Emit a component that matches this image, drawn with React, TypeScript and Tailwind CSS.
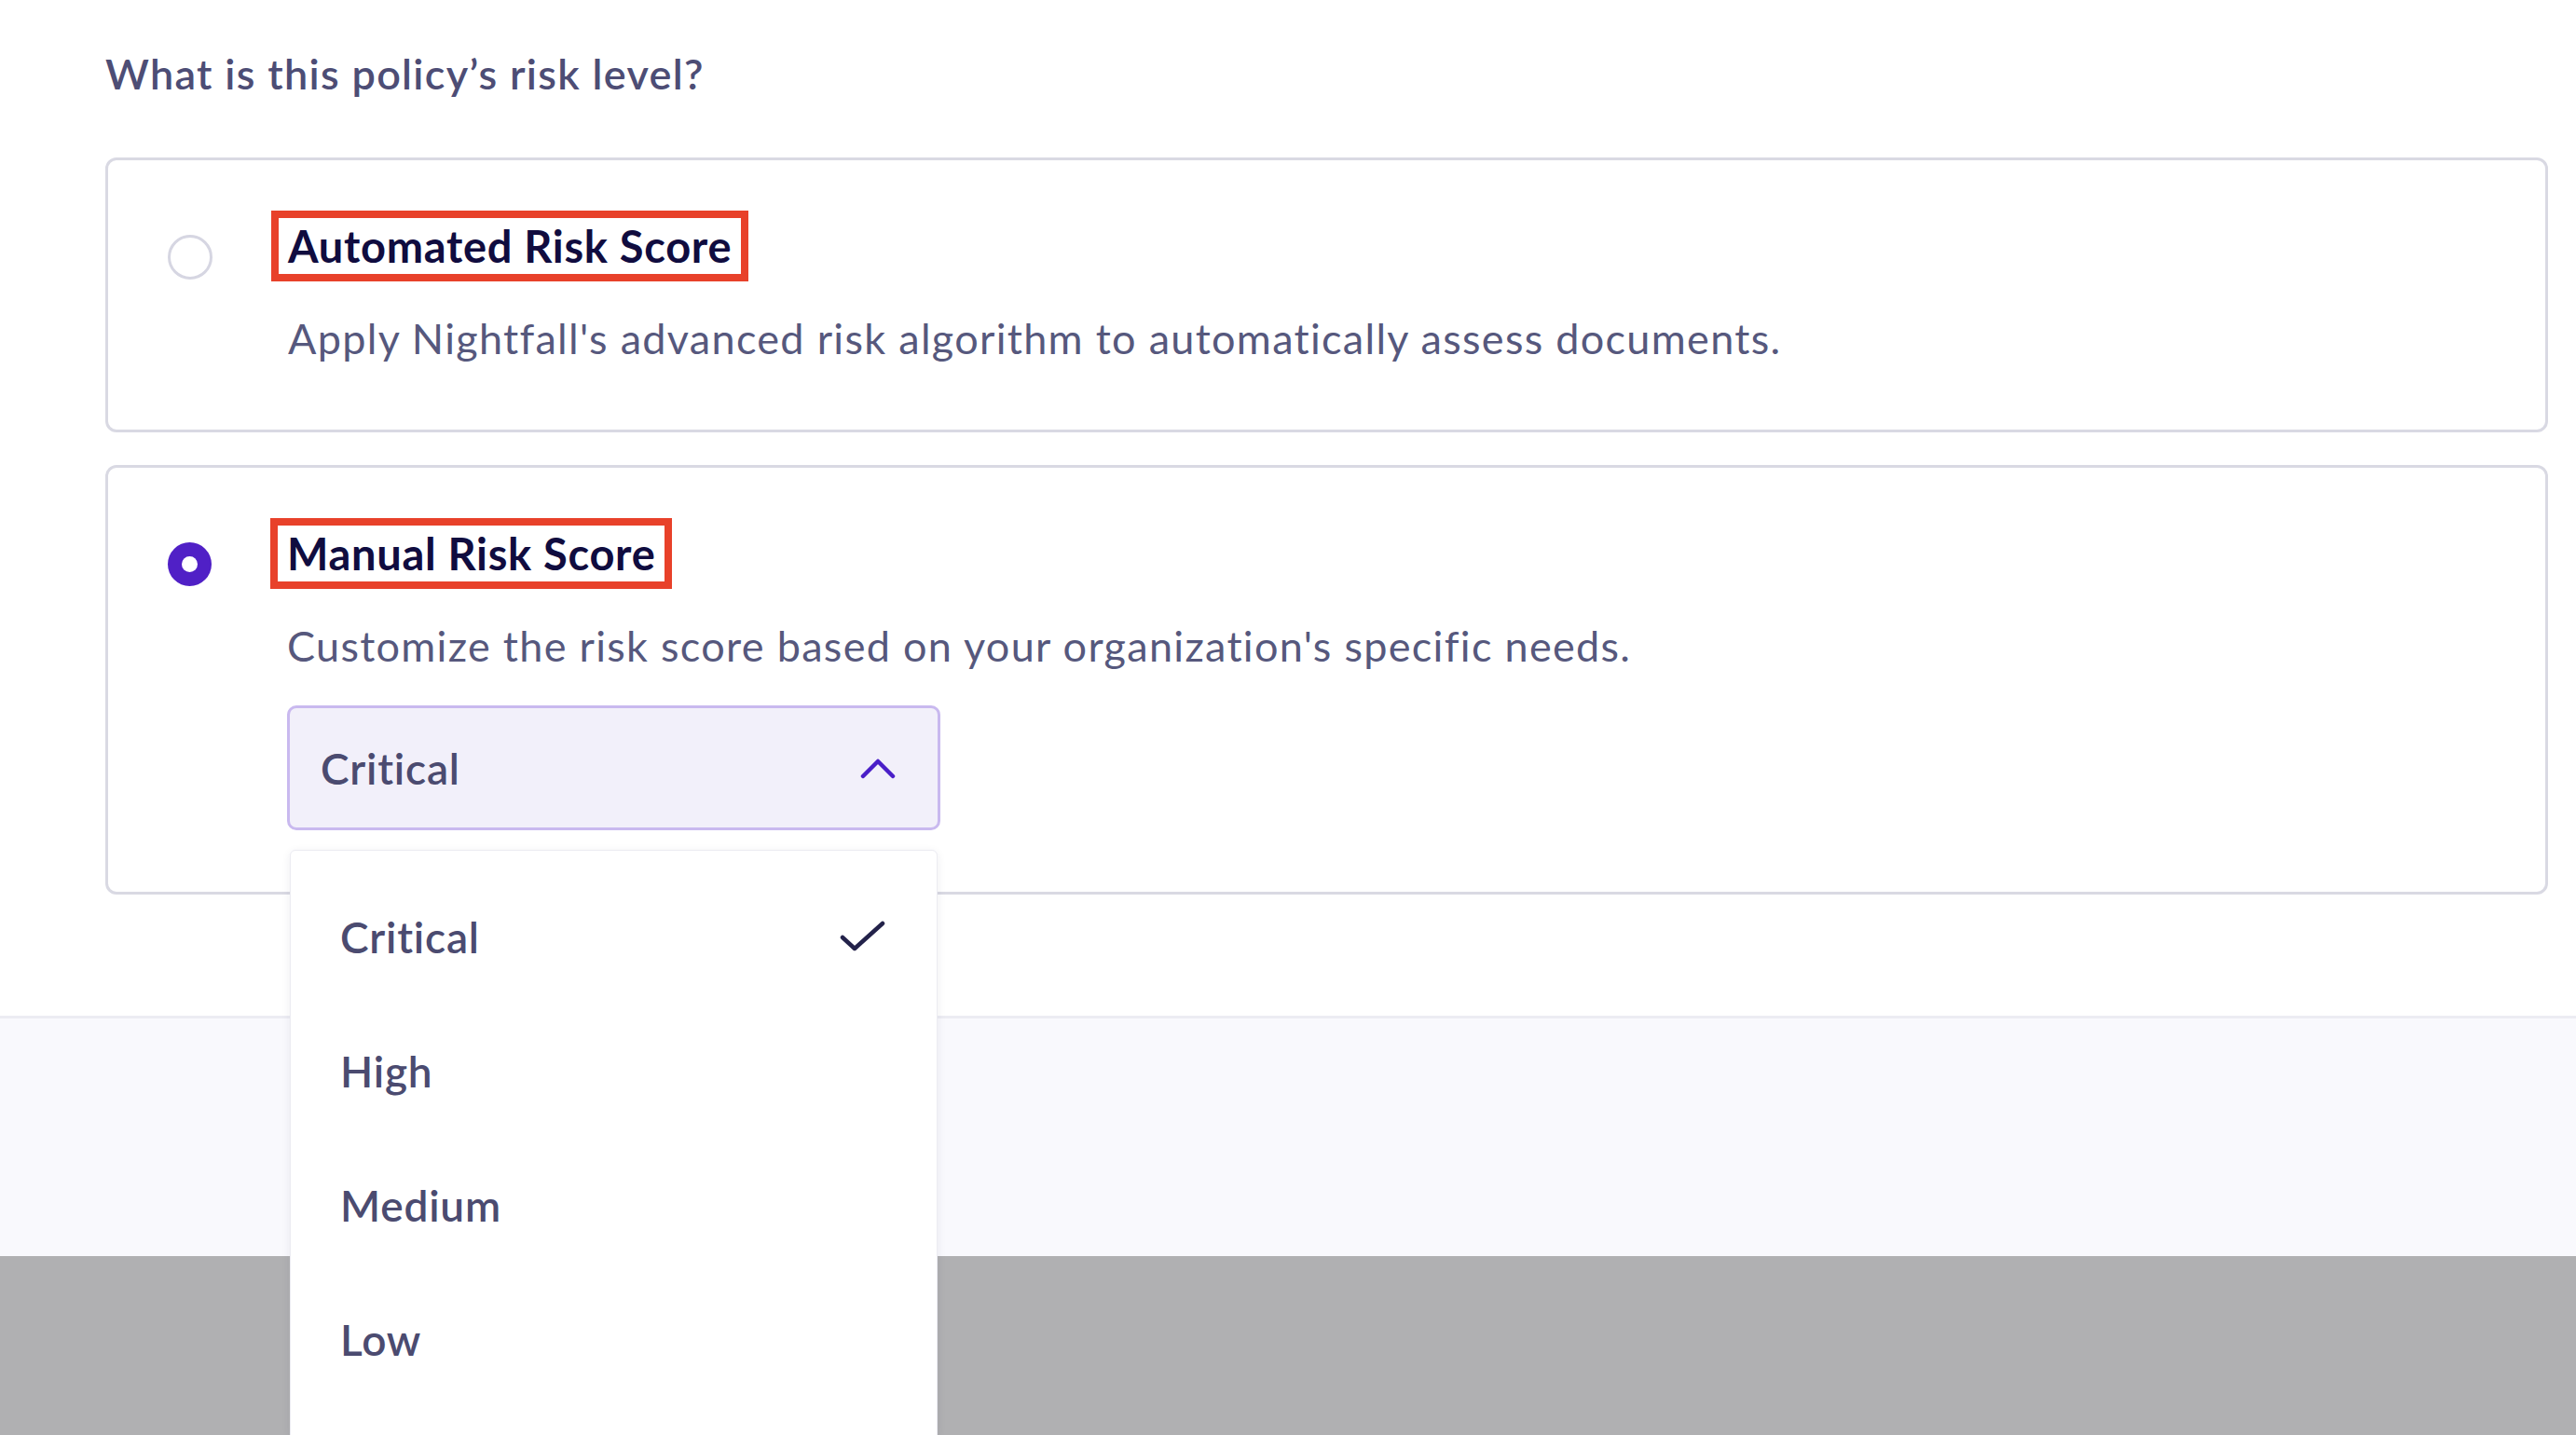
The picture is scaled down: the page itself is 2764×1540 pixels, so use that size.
const levels = ['Critical', 'High', 'Medium', 'Low'];

function Radio({ checked }: { checked: boolean }) {
  if (checked) {
    return (
      <div className="w-[47px] h-[47px] rounded-full bg-[#5020c6] flex items-center justify-center">
        <div className="w-[17px] h-[17px] rounded-full bg-white" />
      </div>
    );
  }
  return <div className="w-[48px] h-[48px] rounded-full border-[3px] border-[#d6d6e2]" />;
}

function OptionCard({
  checked,
  title,
  description,
  children,
  className,
}: {
  checked: boolean;
  title: string;
  description: string;
  children?: React.ReactNode;
  className: string;
}) {
  return (
    <div className={`flex items-start border-[3px] border-[#d9d9e3] rounded-[12px] pl-[64px] ${className}`}>
      <div className="mt-[80px] shrink-0">
        <Radio checked={checked} />
      </div>
      <div className="ml-[81px] pt-[54px] flex flex-col items-start">
        <span className="-ml-[18px] border-[8px] border-[#e8412a] px-[10px] py-[2px] text-[47px] leading-[56px] font-bold text-[#100c3f] tracking-[0.7px]">
          {title}
        </span>
        <p className="mt-[37px] text-[45px] leading-[48px] text-[#56587d] tracking-[1.3px]">{description}</p>
        {children}
      </div>
    </div>
  );
}

function RiskSelect() {
  return (
    <div className="relative mt-[40px]">
      <div className="w-[701px] h-[134px] border-[3px] border-[#c9b9ef] bg-[#f2f0fa] rounded-[10px] flex items-center justify-between pl-[33px] pr-[45px]">
        <span className="text-[46px] font-semibold text-[#4b4b70] tracking-[0.8px]">Critical</span>
        <svg width="38" height="23" viewBox="0 0 38 23" fill="none">
          <path d="M3 20 L19 4 L35 20" stroke="#4a1fc8" strokeWidth="4.5" strokeLinecap="round" strokeLinejoin="round" />
        </svg>
      </div>
      <div className="absolute z-10 left-[3px] top-full mt-[21px] w-[695px] h-[629px] bg-white rounded-t-[6px] border border-[#ececf2] shadow-[0_2px_10px_rgba(40,40,80,0.08)] pt-[20px]">
        {levels.map((level, i) => (
          <div key={level} className="h-[144px] flex items-center justify-between pl-[53px] pr-[54px]">
            <span className="text-[46px] font-semibold text-[#4b4b70] tracking-[0.8px]">{level}</span>
            {i === 0 && (
              <svg width="50" height="36" viewBox="0 0 50 36" fill="none">
                <path d="M3 19 L16 31 L46 4" stroke="#23224a" strokeWidth="4.5" strokeLinecap="round" strokeLinejoin="round" />
              </svg>
            )}
          </div>
        ))}
      </div>
    </div>
  );
}

export default function App() {
  return (
    <main className="min-h-screen flex flex-col bg-white font-['Lato','Liberation_Sans',sans-serif]">
      <section className="pl-[113px] pr-[30px] pt-[55px] pb-[130px]">
        <h1 className="text-[45px] leading-[48px] font-semibold text-[#4d4d75] tracking-[1.3px]">
          What is this policy’s risk level?
        </h1>
        <OptionCard
          className="mt-[66px] pb-[74px]"
          checked={false}
          title="Automated Risk Score"
          description="Apply Nightfall's advanced risk algorithm to automatically assess documents."
        />
        <OptionCard
          className="mt-[35px] pb-[66px]"
          checked
          title="Manual Risk Score"
          description="Customize the risk score based on your organization's specific needs."
        >
          <RiskSelect />
        </OptionCard>
      </section>
      <div className="h-[3px] bg-[#ececf3]" />
      <div className="h-[255px] bg-[#f9f9fd]" />
      <div className="flex-1 bg-[#b0b0b2]" />
    </main>
  );
}
